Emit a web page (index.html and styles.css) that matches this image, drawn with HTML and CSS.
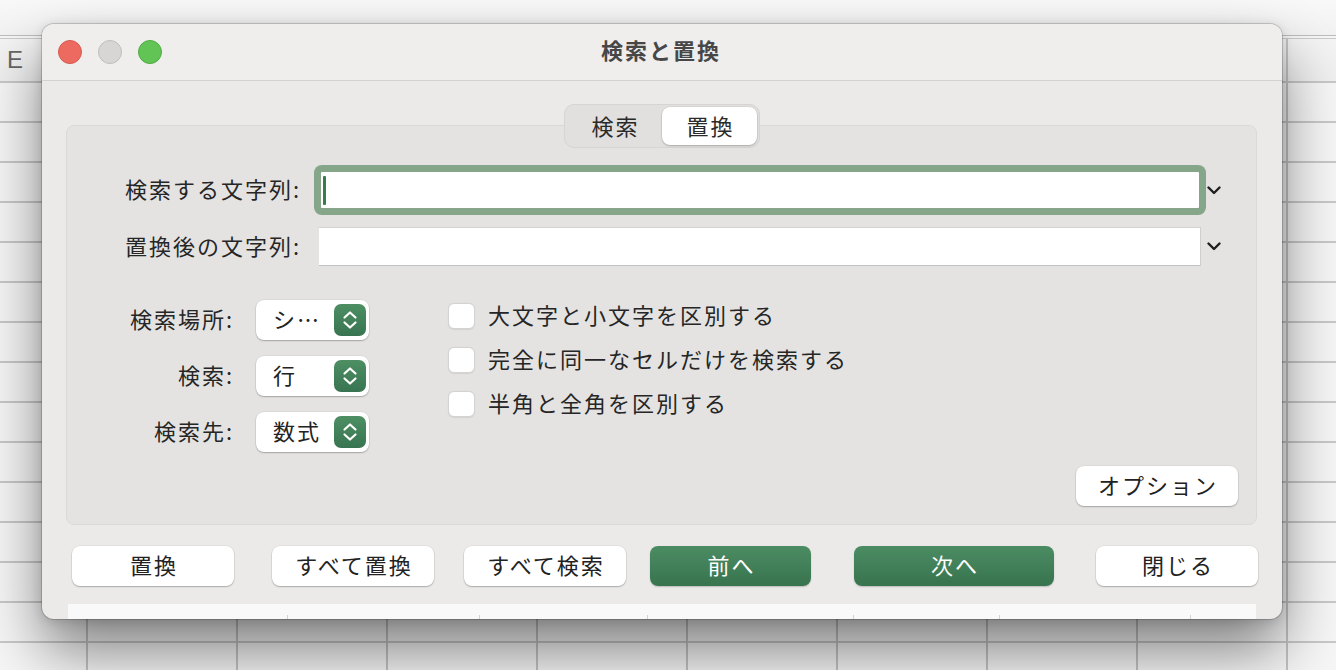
FILE: index.html
```html
<!DOCTYPE html>
<html lang="ja">
<head>
<meta charset="utf-8">
<title>検索と置換</title>
<link rel="stylesheet" href="styles.css">
</head>
<body>
<div class="sheet">
  <div class="sheet-top"></div>
  <div class="sheet-head"><span class="col-e">E</span></div>
  <div class="sheet-cells"></div>
</div>

<div class="dialog">
  <div class="titlebar">
    <div class="lights">
      <span class="light red"></span>
      <span class="light gray"></span>
      <span class="light green"></span>
    </div>
    <div class="title">検索と置換</div>
    <div></div>
  </div>

  <div class="dbody">
    <div class="tabs">
      <div class="tab">検索</div>
      <div class="tab active">置換</div>
    </div>

    <div class="group">
      <div class="frow">
        <span class="flabel">検索する文字列:</span>
        <div class="field focused"><span class="caret"></span></div>
        <svg class="chev" width="14" height="9" viewBox="0 0 14 9"><path d="M1.5 1.5 L7 7 L12.5 1.5" fill="none" stroke="#1f1f1f" stroke-width="2.4" stroke-linecap="round" stroke-linejoin="round"/></svg>
      </div>
      <div class="frow frow2">
        <span class="flabel">置換後の文字列:</span>
        <div class="field plain"></div>
        <svg class="chev" width="14" height="9" viewBox="0 0 14 9"><path d="M1.5 1.5 L7 7 L12.5 1.5" fill="none" stroke="#1f1f1f" stroke-width="2.4" stroke-linecap="round" stroke-linejoin="round"/></svg>
      </div>

      <div class="opts">
        <div class="popcol">
          <div class="prow">
            <span class="plabel">検索場所:</span>
            <div class="popup"><span class="pv">シ…</span>
              <svg class="stepper" width="32" height="32" viewBox="0 0 32 32"><defs><linearGradient id="g1" x1="0" y1="0" x2="0" y2="1"><stop offset="0" stop-color="#4d8f63"/><stop offset="1" stop-color="#387451"/></linearGradient></defs><rect width="32" height="32" rx="7" fill="url(#g1)"/><path d="M10.5 13.5 L16 8.5 L21.5 13.5 M10.5 18.5 L16 23.5 L21.5 18.5" fill="none" stroke="#fff" stroke-width="2.2" stroke-linecap="round" stroke-linejoin="round"/></svg>
            </div>
          </div>
          <div class="prow">
            <span class="plabel">検索:</span>
            <div class="popup"><span class="pv">行</span>
              <svg class="stepper" width="32" height="32" viewBox="0 0 32 32"><rect width="32" height="32" rx="7" fill="url(#g1)"/><path d="M10.5 13.5 L16 8.5 L21.5 13.5 M10.5 18.5 L16 23.5 L21.5 18.5" fill="none" stroke="#fff" stroke-width="2.2" stroke-linecap="round" stroke-linejoin="round"/></svg>
            </div>
          </div>
          <div class="prow">
            <span class="plabel">検索先:</span>
            <div class="popup"><span class="pv">数式</span>
              <svg class="stepper" width="32" height="32" viewBox="0 0 32 32"><rect width="32" height="32" rx="7" fill="url(#g1)"/><path d="M10.5 13.5 L16 8.5 L21.5 13.5 M10.5 18.5 L16 23.5 L21.5 18.5" fill="none" stroke="#fff" stroke-width="2.2" stroke-linecap="round" stroke-linejoin="round"/></svg>
            </div>
          </div>
        </div>

        <div class="checks">
          <div class="crow"><span class="cbox"></span><span class="ctext">大文字と小文字を区別する</span></div>
          <div class="crow"><span class="cbox"></span><span class="ctext">完全に同一なセルだけを検索する</span></div>
          <div class="crow"><span class="cbox"></span><span class="ctext">半角と全角を区別する</span></div>
        </div>
      </div>

      <div class="optrow"><div class="btn">オプション</div></div>
    </div>

    <div class="actions">
      <div class="btn">置換</div>
      <div class="btn">すべて置換</div>
      <div class="btn">すべて検索</div>
      <div class="btn primary">前へ</div>
      <div class="btn primary wide">次へ</div>
      <div class="btn">閉じる</div>
    </div>

    <div class="strip"></div>
  </div>
</div>
</body>
</html>
```

FILE: styles.css
```css
* { box-sizing: border-box; }

html, body {
  margin: 0;
  width: 1336px;
  height: 670px;
  overflow: hidden;
}

body {
  position: relative;
  background: #f5f5f5;
  font-family: "Noto Sans CJK JP", "Noto Sans", sans-serif;
  font-size: 22px;
  letter-spacing: 2px;
  color: #262626;
}

/* ---------- spreadsheet behind ---------- */
.sheet {
  position: absolute;
  inset: 0;
  display: flex;
  flex-direction: column;
  z-index: 0;
}
.sheet-top {
  height: 36px;
  background: linear-gradient(#f8f8f8, #f2f2f2);
  border-bottom: 1px solid #bdbdbd;
}
.sheet-head {
  margin-top: 2px;
  height: 45px;
  border-top: 1px solid #cacaca;
  border-bottom: 2px solid #c8c8c8;
  background:
    linear-gradient(to right, #c6c6c6 2px, transparent 2px) 86px 0 / 150px 100% repeat-x,
    linear-gradient(#f4f4f4, #efefef);
  display: flex;
  align-items: center;
  padding-left: 7px;
}
.col-e {
  font-family: "Liberation Sans", sans-serif;
  font-size: 24px;
  letter-spacing: 0;
  color: #666666;
}
.sheet-cells {
  flex: 1;
  background:
    linear-gradient(to right, #c4c4c4 2px, transparent 2px) 86px 0 / 150px 100% repeat-x,
    linear-gradient(#c8c8c8 2px, transparent 2px) 0 38px / 100% 40px repeat-y,
    #f6f6f6;
}

/* ---------- dialog ---------- */
.dialog {
  position: relative;
  z-index: 1;
  margin: 24px 0 0 42px;
  width: 1240px;
  height: 595px;
  border-radius: 12px;
  overflow: hidden;
  background: #ebeae9;
  box-shadow:
    0 0 0 1px rgba(0, 0, 0, 0.16),
    0 2px 12px rgba(0, 0, 0, 0.14),
    0 32px 60px rgba(0, 0, 0, 0.48);
}

.titlebar {
  height: 57px;
  background: #efeeed;
  border-bottom: 1px solid #d3d2d1;
  display: grid;
  grid-template-columns: 1fr auto 1fr;
  align-items: center;
}
.lights {
  display: flex;
  gap: 16px;
  margin-left: 16px;
}
.light {
  width: 24px;
  height: 24px;
  border-radius: 50%;
}
.light.red { background: #ec6a5f; border: 1px solid #d55a4f; }
.light.gray { background: #d7d6d5; border: 1px solid #bfbebd; }
.light.green { background: #61c454; border: 1px solid #50ab43; }
.title {
  font-weight: 700;
  color: #474747;
  padding-right: 2px;
  padding-bottom: 6px;
}

.dbody {
  padding-top: 23px;
  display: flex;
  flex-direction: column;
}

/* tabs */
.tabs {
  position: relative;
  z-index: 2;
  align-self: center;
  display: flex;
  padding: 2px;
  height: 44px;
  border-radius: 10px;
  background: #e1e0df;
  border: 1px solid #d6d5d4;
}
.tab {
  width: 95px;
  height: 38px;
  display: flex;
  align-items: center;
  justify-content: center;
  padding: 0 0 3px 2px;
  color: #2a2a2a;
  border-radius: 8px;
}
.tab.active {
  background: #ffffff;
  box-shadow: 0 1px 2px rgba(0, 0, 0, 0.22), 0 0 0 0.5px rgba(0, 0, 0, 0.08);
}

/* group box */
.group {
  margin: -23px 25px 0 24px;
  height: 400px;
  background: #e4e3e2;
  border: 1px solid #dad9d8;
  border-radius: 8px;
  padding: 44px 18px 18px 0;
  display: flex;
  flex-direction: column;
}

.frow {
  display: flex;
  align-items: center;
  height: 40px;
}
.frow2 {
  margin-top: 17px;
  height: 39px;
}
.flabel {
  width: 234px;
  text-align: right;
  color: #262626;
  padding-bottom: 4px;
}
.field {
  margin-left: 18px;
  width: 882px;
  height: 100%;
  background: #ffffff;
  display: flex;
  align-items: center;
}
.field.focused {
  border: 2px solid #86a689;
  border-radius: 3px;
  box-shadow: 0 0 0 5px #86a689;
  padding-left: 2px;
}
.field.plain {
  border-top: 1px solid #d2d2d2;
  border-right: 1px solid #cfcfcf;
  border-bottom: 1px solid #c2c2c2;
}
.caret {
  width: 3px;
  height: 29px;
  background: #3b7a4c;
  border-radius: 1px;
}
.chev {
  margin-left: 6px;
}

/* lower options */
.opts {
  margin-top: 34px;
  display: flex;
}
.popcol {
  display: flex;
  flex-direction: column;
  gap: 16px;
}
.prow {
  display: flex;
  align-items: center;
  height: 40px;
}
.plabel {
  width: 167px;
  text-align: right;
  color: #262626;
  padding-bottom: 4px;
}
.popup {
  margin-left: 22px;
  width: 113px;
  height: 40px;
  background: #ffffff;
  border-radius: 8px;
  box-shadow: 0 1px 1.5px rgba(0, 0, 0, 0.25), 0 0 0 0.5px rgba(0, 0, 0, 0.08);
  display: flex;
  align-items: center;
  justify-content: space-between;
  padding: 0 3px 0 17px;
}
.pv {
  color: #222;
  padding-bottom: 4px;
}
.stepper {
  display: block;
}

.checks {
  margin-left: 79px;
  margin-top: 3px;
  display: flex;
  flex-direction: column;
  gap: 18px;
}
.crow {
  display: flex;
  align-items: center;
  height: 26px;
}
.cbox {
  width: 27px;
  height: 26px;
  border-radius: 6px;
  background: #ffffff;
  border: 1px solid #d3d3d3;
  box-shadow: 0 0.5px 1px rgba(0, 0, 0, 0.08);
}
.ctext {
  margin-left: 13px;
  color: #262626;
  padding-bottom: 4px;
}

.optrow {
  margin-top: 14px;
  display: flex;
  justify-content: flex-end;
}

/* buttons */
.btn {
  width: 162px;
  height: 40px;
  border-radius: 8px;
  background: #ffffff;
  color: #222;
  display: flex;
  align-items: center;
  justify-content: center;
  padding: 0 0 4px 2px;
  box-shadow: 0 1px 1.5px rgba(0, 0, 0, 0.25), 0 0 0 0.5px rgba(0, 0, 0, 0.08);
}
.btn.primary {
  width: 161px;
  color: #ffffff;
  background: linear-gradient(#4b8c62, #38744f);
  box-shadow: 0 1px 1.5px rgba(0, 0, 0, 0.2);
}
.btn.wide {
  width: 200px;
}

.actions {
  margin-top: 21px;
  padding-left: 30px;
  display: flex;
}
.actions .btn:nth-child(2) { margin-left: 38px; }
.actions .btn:nth-child(3) { margin-left: 30px; }
.actions .btn:nth-child(4) { margin-left: 24px; }
.actions .btn:nth-child(5) { margin-left: 43px; }
.actions .btn:nth-child(6) { margin-left: 42px; }

.strip {
  margin: 18px 26px 0 26px;
  height: 15px;
  background:
    linear-gradient(#d2d2d2, #d2d2d2) 219px 100% / 1px 4px no-repeat,
    linear-gradient(#d2d2d2, #d2d2d2) 411px 100% / 1px 4px no-repeat,
    linear-gradient(#d2d2d2, #d2d2d2) 579px 100% / 1px 4px no-repeat,
    linear-gradient(#d2d2d2, #d2d2d2) 785px 100% / 1px 4px no-repeat,
    linear-gradient(#d2d2d2, #d2d2d2) 931px 100% / 1px 4px no-repeat,
    linear-gradient(#d2d2d2, #d2d2d2) 1122px 100% / 1px 4px no-repeat,
    #f9f9f9;
}
```
